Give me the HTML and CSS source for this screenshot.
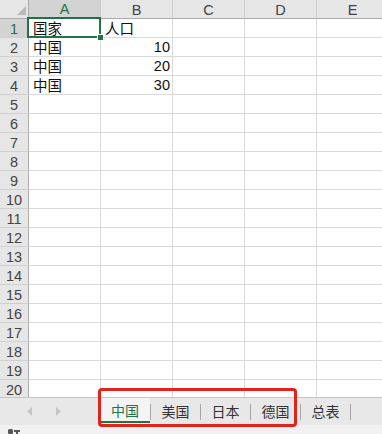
FILE: index.html
```html
<!DOCTYPE html>
<html lang="zh">
<head>
<meta charset="utf-8">
<link rel="stylesheet" href="styles.css">
</head>
<body>
<div class="app">
  <div class="sheet">
    <div class="grid">
      <div class="corner"><svg width="9" height="9" viewBox="0 0 9 9"><polygon points="9,0 9,9 0,9" fill="#b9b9b9"/></svg></div>
      <div class="ch active">A</div><div class="ch">B</div><div class="ch">C</div><div class="ch">D</div><div class="ch">E</div>

      <div class="rh active">1</div><div class="c sel">国家</div><div class="c">人口</div><div class="c"></div><div class="c"></div><div class="c"></div>
      <div class="rh">2</div><div class="c">中国</div><div class="c num">10</div><div class="c"></div><div class="c"></div><div class="c"></div>
      <div class="rh">3</div><div class="c">中国</div><div class="c num">20</div><div class="c"></div><div class="c"></div><div class="c"></div>
      <div class="rh">4</div><div class="c">中国</div><div class="c num">30</div><div class="c"></div><div class="c"></div><div class="c"></div>
      <div class="rh">5</div><div class="c"></div><div class="c"></div><div class="c"></div><div class="c"></div><div class="c"></div>
      <div class="rh">6</div><div class="c"></div><div class="c"></div><div class="c"></div><div class="c"></div><div class="c"></div>
      <div class="rh">7</div><div class="c"></div><div class="c"></div><div class="c"></div><div class="c"></div><div class="c"></div>
      <div class="rh">8</div><div class="c"></div><div class="c"></div><div class="c"></div><div class="c"></div><div class="c"></div>
      <div class="rh">9</div><div class="c"></div><div class="c"></div><div class="c"></div><div class="c"></div><div class="c"></div>
      <div class="rh">10</div><div class="c"></div><div class="c"></div><div class="c"></div><div class="c"></div><div class="c"></div>
      <div class="rh">11</div><div class="c"></div><div class="c"></div><div class="c"></div><div class="c"></div><div class="c"></div>
      <div class="rh">12</div><div class="c"></div><div class="c"></div><div class="c"></div><div class="c"></div><div class="c"></div>
      <div class="rh">13</div><div class="c"></div><div class="c"></div><div class="c"></div><div class="c"></div><div class="c"></div>
      <div class="rh">14</div><div class="c"></div><div class="c"></div><div class="c"></div><div class="c"></div><div class="c"></div>
      <div class="rh">15</div><div class="c"></div><div class="c"></div><div class="c"></div><div class="c"></div><div class="c"></div>
      <div class="rh">16</div><div class="c"></div><div class="c"></div><div class="c"></div><div class="c"></div><div class="c"></div>
      <div class="rh">17</div><div class="c"></div><div class="c"></div><div class="c"></div><div class="c"></div><div class="c"></div>
      <div class="rh">18</div><div class="c"></div><div class="c"></div><div class="c"></div><div class="c"></div><div class="c"></div>
      <div class="rh">19</div><div class="c"></div><div class="c"></div><div class="c"></div><div class="c"></div><div class="c"></div>
      <div class="rh">20</div><div class="c"></div><div class="c"></div><div class="c"></div><div class="c"></div><div class="c"></div>
    </div>
  </div>
  <div class="tabbar">
    <div class="nav">
      <svg class="arrow" width="5" height="9" viewBox="0 0 5 9"><polygon points="5,0 5,9 0,4.5" fill="#c4c4c4"/></svg>
      <svg class="arrow" width="5" height="9" viewBox="0 0 5 9"><polygon points="0,0 0,9 5,4.5" fill="#c4c4c4"/></svg>
    </div>
    <div class="tab current">中国</div>
    <div class="sep"></div>
    <div class="tab">美国</div>
    <div class="sep"></div>
    <div class="tab">日本</div>
    <div class="sep"></div>
    <div class="tab">德国</div>
    <div class="sep"></div>
    <div class="tab">总表</div>
    <div class="sep"></div>
    <div class="highlight"></div>
  </div>
  <div class="status">
    <svg width="14" height="6" viewBox="0 0 14 6"><rect x="1" y="1" width="5" height="5" rx="1.5" fill="#555"/><rect x="7" y="2" width="6" height="2" fill="#555"/><rect x="9" y="2" width="2" height="4" fill="#555"/></svg>
  </div>
</div>
</body>
</html>
```

FILE: styles.css
```css
html, body {
  margin: 0;
  padding: 0;
  background: #ffffff;
}

.app {
  width: 382px;
  height: 434px;
  overflow: hidden;
  position: relative;
  display: flex;
  flex-direction: column;
  font-family: "Noto Sans CJK SC", "Noto Sans", sans-serif;
}

.sheet {
  height: 397px;
  overflow: hidden;
  flex: none;
}

.grid {
  display: grid;
  grid-template-columns: 29px repeat(5, 72px);
  grid-auto-rows: 19px;
  width: 389px;
}

.grid > div {
  box-sizing: border-box;
}

.corner {
  background: #e6e6e6;
  border-right: 1px solid #ababab;
  border-bottom: 1px solid #ababab;
  display: flex;
  align-items: flex-end;
  justify-content: flex-end;
  padding: 0 2px 3px 0;
}

.corner svg {
  display: block;
}

.ch {
  background: #e6e6e6;
  border-right: 1px solid #cdcdcd;
  border-bottom: 1px solid #ababab;
  color: #444444;
  font-family: "Liberation Sans", "Noto Sans", sans-serif;
  font-size: 14.5px;
  display: flex;
  align-items: center;
  justify-content: center;
  padding-top: 1px;
}

.ch.active {
  background: #d3d3d3;
  color: #217346;
  border-bottom: 2px solid #217346;
}

.rh {
  background: #e6e6e6;
  border-right: 1px solid #ababab;
  border-bottom: 1px solid #d0d0d0;
  color: #444444;
  font-family: "Liberation Sans", "Noto Sans", sans-serif;
  font-size: 14.5px;
  display: flex;
  align-items: center;
  justify-content: center;
  padding-top: 1px;
}

.rh.active {
  background: #d3d3d3;
  color: #217346;
}

.c {
  border-right: 1px solid #d9d9d9;
  border-bottom: 1px solid #d9d9d9;
  font-size: 14.5px;
  color: #111111;
  display: flex;
  align-items: center;
  padding: 0 3px 0 4px;
  white-space: nowrap;
  line-height: 1;
}

.c.num {
  justify-content: flex-end;
  font-family: "Liberation Sans", "Noto Sans", sans-serif;
  padding-right: 2px;
}

.c.sel {
  position: relative;
}

.c.sel::after {
  content: "";
  position: absolute;
  left: -2px;
  top: -2px;
  width: 74px;
  height: 21px;
  box-sizing: border-box;
  border: 2px solid #217346;
}

.c.sel::before {
  content: "";
  position: absolute;
  right: -4px;
  bottom: -4px;
  width: 5px;
  height: 5px;
  background: #217346;
  border: 1px solid #ffffff;
  z-index: 2;
}

.tabbar {
  height: 28px;
  box-sizing: border-box;
  border-top: 1px solid #c6c6c6;
  background: #e8e8e8;
  display: flex;
  align-items: stretch;
  position: relative;
  flex: none;
}

.nav {
  width: 100px;
  flex: none;
  display: flex;
  align-items: center;
  gap: 24px;
  padding-left: 27px;
  box-sizing: border-box;
}

.arrow {
  display: block;
}

.tab {
  width: 49px;
  flex: none;
  display: flex;
  align-items: center;
  justify-content: center;
  font-size: 14px;
  color: #333333;
  box-sizing: border-box;
  padding-bottom: 2px;
}

.tab.current {
  background: #f4f4f4;
  color: #217346;
  width: 50px;
  border-bottom: 2px solid #217346;
  padding-bottom: 0;
  margin-bottom: 2px;
}

.sep {
  width: 1px;
  height: 16px;
  background: #a6a6a6;
  align-self: center;
  flex: none;
}

.highlight {
  position: absolute;
  left: 98px;
  top: -10px;
  width: 199px;
  height: 39px;
  box-sizing: border-box;
  border: 3px solid #e3221c;
  border-radius: 4px;
}

.status {
  flex: 1;
  background: #f1f1f1;
  display: flex;
  align-items: flex-end;
  padding-left: 7px;
}

.status svg {
  display: block;
}
```
